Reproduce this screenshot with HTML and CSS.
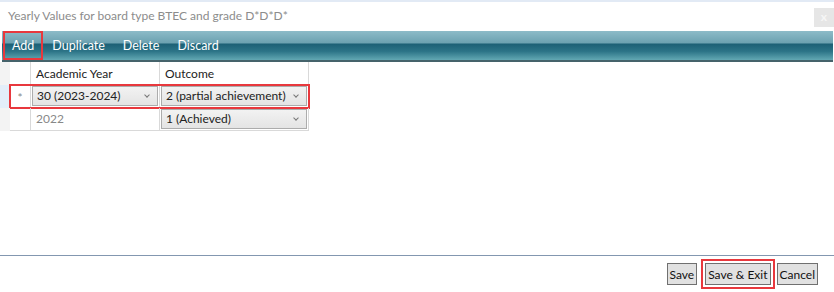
FILE: index.html
```html
<!DOCTYPE html>
<html lang="en">
<head>
    <meta charset="UTF-8">
    <title>Yearly Values</title>
    <link rel="stylesheet" href="styles.css">
</head>
<body>
    <div class="dialog">
        <div class="titlebar">
            <span class="title">Yearly Values for board type BTEC and grade D*D*D*</span>
            <span class="close">x</span>
        </div>

        <!-- Toolbar -->
        <div class="toolbar">
            <span class="tool marked">Add</span>
            <span class="tool">Duplicate</span>
            <span class="tool">Delete</span>
            <span class="tool">Discard</span>
        </div>

        <!-- Grid -->
        <div class="grid">
            <div class="row head">
                <div class="gutter"></div>
                <div class="cell sel"></div>
                <div class="cell year">Academic Year</div>
                <div class="cell outcome">Outcome</div>
            </div>
            <div class="row current">
                <div class="gutter"></div>
                <div class="cells marked">
                    <div class="cell sel">*</div>
                    <div class="cell year"><div class="combo">30 (2023-2024)<span class="arrow"></span></div></div>
                    <div class="cell outcome"><div class="combo">2 (partial achievement)<span class="arrow"></span></div></div>
                </div>
            </div>
            <div class="row">
                <div class="gutter"></div>
                <div class="cell sel"></div>
                <div class="cell year plain">2022</div>
                <div class="cell outcome"><div class="combo">1 (Achieved)<span class="arrow"></span></div></div>
            </div>
        </div>

        <div class="footer">
            <button class="btn">Save</button>
            <span class="marked-btn"><button class="btn">Save &amp; Exit</button></span>
            <button class="btn">Cancel</button>
        </div>
    </div>
</body>
</html>
```

FILE: styles.css
```css
body {
    margin: 0;
    font-family: Lato, "Noto Sans", sans-serif;
    background: white;
}
.dialog {
    height: 292px;
    display: flex;
    flex-direction: column;
    border-top: 2px solid #e2eaf5;
    box-sizing: border-box;
}
.titlebar {
    height: 29px;
    display: flex;
    align-items: flex-start;
    justify-content: space-between;
}
.title {
    margin: 6px 0 0 8px;
    font-size: 12px;
    color: #8c8c8c;
}
.close {
    margin-top: 6px;
    width: 20px;
    height: 19px;
    background: #e6e6e6;
    color: #f6f6f6;
    font-size: 12px;
    font-weight: bold;
    text-align: center;
    line-height: 18px;
}
.toolbar {
    height: 29px;
    margin: 0 1px 0 2px;
    display: flex;
    align-items: stretch;
    padding-left: 1px;
    background: linear-gradient(#8dbbc8 0%, #6da2b1 40%, #1d6176 46%, #2c7487 70%, #62a8b3 100%);
    border-bottom: 2px solid #45636b;
}
.tool {
    color: white;
    font-size: 12.5px;
    padding: 0 9px;
    line-height: 29px;
}
.tool.marked {
    outline: 2px solid #e8383d;
    outline-offset: -2px;
}
.grid {
    font-size: 12px;
    color: #222;
}
.row {
    display: flex;
    height: 23px;
}
.gutter {
    width: 10px;
    background: #f3f3f3;
}
.row.current .gutter {
    background: #e3eef9;
}
.cells {
    display: flex;
}
.cells.marked {
    outline: 2px solid #e8383d;
    outline-offset: -1px;
}
.cell {
    box-sizing: border-box;
    border-right: 1px solid #d9d9d9;
    border-bottom: 1px solid #d9d9d9;
    padding: 1px 1px 0 1px;
}
.sel {
    width: 21px;
    color: #8a8a8a;
    text-align: center;
    padding: 5px 0 0 0;
}
.year {
    width: 129px;
}
.outcome {
    width: 149px;
}
.head .cell {
    padding: 4px 0 0 5px;
}
.head .sel {
    padding: 0;
}
.plain {
    color: #888;
    padding: 3px 0 0 5px;
}
.combo {
    position: relative;
    height: 20px;
    box-sizing: border-box;
    border: 1px solid #acacac;
    background: linear-gradient(#f2f2f2, #e4e4e4);
    padding-left: 4px;
    line-height: 18px;
    white-space: nowrap;
}
.arrow {
    position: absolute;
    right: 8px;
    top: 6px;
    width: 3px;
    height: 3px;
    border-right: 1px solid #777;
    border-bottom: 1px solid #777;
    transform: rotate(45deg);
}
.footer {
    margin-top: auto;
    border-top: 1px solid #8397b0;
    height: 36px;
    display: flex;
    justify-content: flex-end;
    align-items: center;
    padding-right: 16px;
    gap: 6px;
}
.btn {
    font-family: Lato, "Noto Sans", sans-serif;
    font-size: 12px;
    height: 22px;
    padding: 0 2px;
    background: #e1e1e1;
    border: 1px solid #707070;
    color: #111;
}
.marked-btn {
    display: flex;
    margin-left: 2px;
    outline: 2px solid #e8383d;
    outline-offset: 2px;
}
```
